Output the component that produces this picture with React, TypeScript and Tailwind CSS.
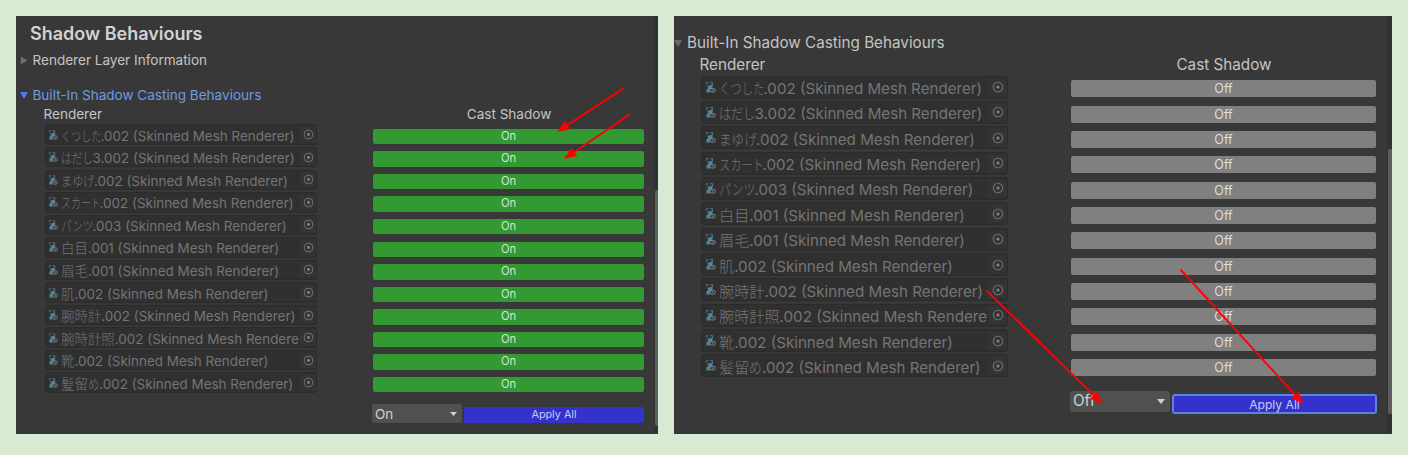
import React from "react";

type Segment = { text: string; className: string };
type Item = { id: string; name: Segment[]; suffix: string };

const SKINNED = "(Skinned Mesh Renderer)";

const items: Item[] = [
  { id: "socks", name: [{ text: "くつした", className: "w-[2.93em] scale-x-[0.75]" }], suffix: `.002 ${SKINNED}` },
  { id: "feet", name: [{ text: "はだし", className: "w-[2.35em] scale-x-[0.8]" }], suffix: `3.002 ${SKINNED}` },
  { id: "brow", name: [{ text: "まゆげ", className: "w-[2.45em] scale-x-[0.83]" }], suffix: `.002 ${SKINNED}` },
  { id: "skirt", name: [{ text: "スカート", className: "w-[2.87em] scale-x-[0.74]" }], suffix: `.002 ${SKINNED}` },
  { id: "pants", name: [{ text: "パンツ", className: "w-[2.35em] scale-x-[0.79]" }], suffix: `.003 ${SKINNED}` },
  { id: "eyes", name: [{ text: "白目", className: "w-[2em]" }], suffix: `.001 ${SKINNED}` },
  { id: "browhair", name: [{ text: "眉毛", className: "w-[2em]" }], suffix: `.001 ${SKINNED}` },
  { id: "skin", name: [{ text: "肌", className: "w-[1em]" }], suffix: `.002 ${SKINNED}` },
  { id: "watch", name: [{ text: "腕時計", className: "w-[3em]" }], suffix: `.002 ${SKINNED}` },
  { id: "watchlight", name: [{ text: "腕時計照", className: "w-[4em]" }], suffix: ".002 (Skinned Mesh Rendere" },
  { id: "shoes", name: [{ text: "靴", className: "w-[1em]" }], suffix: `.002 ${SKINNED}` },
  {
    id: "hairpin",
    name: [
      { text: "髪留", className: "w-[2em]" },
      { text: "め", className: "w-[0.84em] scale-x-[0.84]" },
    ],
    suffix: `.002 ${SKINNED}`,
  },
];

function MeshIcon({ className }: { className: string }) {
  return (
    <svg viewBox="0 0 20 22" className={className} fill="none">
      <path d="M1 5V1.5H5M8 1.5h5V6" stroke="#56707a" strokeWidth="2.2" />
      <path d="M2 7.5 8 7l2-2 4 2.5-2 5-5 2.5 1 6H1v-6l4-3.5Z" fill="#4a89a3" />
      <ellipse cx="13.4" cy="16.5" rx="5.4" ry="3.9" fill="#303030" stroke="#8c8c8c" strokeWidth="1.9" />
      <circle cx="13.4" cy="16.5" r="1.4" fill="#8a8a8a" />
    </svg>
  );
}

function PickerIcon({ className }: { className: string }) {
  return (
    <svg viewBox="0 0 12 12" className={className} fill="none">
      <circle cx="6" cy="6" r="4.7" stroke="#707070" strokeWidth="1.1" />
      <circle cx="6" cy="6" r="1.6" fill="#808080" />
    </svg>
  );
}

function Caret({ className }: { className: string }) {
  return (
    <svg viewBox="0 0 8 8" preserveAspectRatio="none" className={className}>
      <path d="M0 0h8L4 8Z" fill="currentColor" />
    </svg>
  );
}

type Size = {
  row: string;
  field: string;
  mesh: string;
  text: string;
  picker: string;
  pickerIcon: string;
};

function ObjectField({ item, size }: { item: Item; size: Size }) {
  return (
    <div className={size.row}>
      <div className={`flex items-center overflow-hidden rounded-[3px] border border-[#2b2b2b] bg-[#303030] ${size.field}`}>
        <MeshIcon className={size.mesh} />
        <div className={`min-w-0 flex-1 whitespace-nowrap text-[#757575] ${size.text}`}>
          {item.name.map((s) => (
            <span
              key={s.text}
              className={`inline-block origin-left whitespace-nowrap font-['Noto_Sans_CJK_JP',sans-serif] leading-none font-light ${s.className}`}
            >
              {s.text}
            </span>
          ))}
          <span>{item.suffix}</span>
        </div>
        <div className={`flex shrink-0 items-center justify-center bg-[#343434] ${size.picker}`}>
          <PickerIcon className={size.pickerIcon} />
        </div>
      </div>
    </div>
  );
}

const small: Size = {
  row: "h-[22.55px]",
  field: "h-[20.5px] w-[272px] pl-[3px]",
  mesh: "mr-[3px] h-[10px] w-[9px] shrink-0",
  text: "h-[20px] pt-[2px] text-[13.45px] leading-[19px]",
  picker: "h-[15px] w-[16px]",
  pickerIcon: "h-[11px] w-[11px]",
};

const large: Size = {
  row: "h-[25.37px]",
  field: "h-[23px] w-[306.5px] pl-[3.5px]",
  mesh: "mr-[3.5px] h-[11px] w-[10px] shrink-0",
  text: "h-[22px] pt-[2px] text-[15.15px] leading-[21px]",
  picker: "h-[17px] w-[18px]",
  pickerIcon: "h-[12px] w-[12px]",
};

function LeftPanel() {
  return (
    <section className="flex h-[418px] w-[642px] overflow-hidden bg-[#383838] text-[#c4c4c4]">
      <div className="flex w-[638px] flex-col">
        <h1 className="mt-[5px] ml-[14px] h-[26px] text-[18px] leading-[26px] font-semibold text-[#d2d2d2]">Shadow Behaviours</h1>
        <div className="mt-[3px] ml-[4px] flex h-5 items-center text-[13.55px]">
          <Caret className="mr-[4px] h-[7px] w-[8px] -rotate-90 text-[#727272]" />
          <span className="ml-[0.5px]">Renderer Layer Information</span>
        </div>
        <div className="mt-[15px] ml-[4px] flex h-5 items-center text-[13.55px] text-[#6f99e0]">
          <Caret className="mr-[4px] h-[7px] w-[8px] text-[#4a7be8]" />
          <span className="ml-[0.5px]">Built-In Shadow Casting Behaviours</span>
        </div>
        <div className="flex h-[19px] items-center text-[13.55px]">
          <span className="ml-[27.5px] w-[330px]">Renderer</span>
          <span className="w-[271px] text-center">Cast Shadow</span>
        </div>
        <div className="flex">
          <div className="mt-[0.45px] ml-[29px] w-[328px]">
            {items.map((i) => (
              <ObjectField key={i.id} item={i} size={small} />
            ))}
          </div>
          <div className="mt-[4.8px] w-[271px]">
            {items.map((i) => (
              <div key={i.id} className="h-[22.55px]">
                <button className="block h-[15.5px] w-full rounded-[2px] bg-[#339933] text-[11.2px] leading-[15.5px] text-[#cfe6cf]">On</button>
              </div>
            ))}
          </div>
        </div>
        <div className="ml-[356px] flex">
          <button className="mt-[5px] flex h-[19px] w-[90px] items-center justify-between rounded-[2px] bg-[#505050] pr-[5px] pl-[3px] text-[13.5px] text-[#d0d0d0]">
            On
            <Caret className="h-[4px] w-[7px]" />
          </button>
          <button className="mt-[8px] ml-[2px] h-[16px] w-[180px] rounded-[2px] bg-[#3333cc] text-[10.8px] leading-[16px] text-[#c9c9f2]">Apply All</button>
        </div>
      </div>
      <div className="w-[4px] bg-[#323232] pt-[174px] pl-px">
        <div className="h-[236px] rounded-l-[2px] bg-[#5d5d5d]" />
      </div>
    </section>
  );
}

function RightPanel() {
  return (
    <section className="flex h-[418px] w-[718px] overflow-hidden bg-[#383838] text-[#c4c4c4]">
      <div className="flex w-[713px] flex-col">
        <div className="mt-[17px] flex h-5 items-center text-[15.25px]">
          <Caret className="mr-[5px] h-[7px] w-[8px] text-[#686868]" />
          <span>Built-In Shadow Casting Behaviours</span>
        </div>
        <div className="mt-[2px] flex h-5 items-center text-[15.25px]">
          <span className="ml-[25.5px] w-[372px]">Renderer</span>
          <span className="w-[305px] text-center">Cast Shadow</span>
        </div>
        <div className="flex">
          <div className="mt-[0.5px] ml-[27px] w-[370px]">
            {items.map((i) => (
              <ObjectField key={i.id} item={i} size={large} />
            ))}
          </div>
          <div className="mt-[5.2px] w-[305px]">
            {items.map((i) => (
              <div key={i.id} className="h-[25.37px]">
                <button className="block h-[17px] w-full rounded-[2px] bg-[#808080] text-[12.5px] leading-[17px] text-[#dedede]">Off</button>
              </div>
            ))}
          </div>
        </div>
        <div className="ml-[396px] flex">
          <button className="mt-[6px] flex h-[21px] w-[100px] items-center justify-between rounded-[2px] bg-[#505050] pr-[5px] pl-[3px] text-[15.2px] text-[#d0d0d0]">
            Off
            <Caret className="h-[5px] w-[8px]" />
          </button>
          <button className="mt-[9px] ml-[2px] h-[20px] w-[205px] rounded-[3px] border-2 border-[#5b82dc] bg-[#3333cc] text-[12.1px] leading-[17px] text-[#c9c9f2]">Apply All</button>
        </div>
      </div>
      <div className="w-[5px] bg-[#323232] pt-[133px] pl-px">
        <div className="h-[265px] rounded-l-[2px] bg-[#5d5d5d]" />
      </div>
    </section>
  );
}

const arrows = [
  [623.5, 88.5, 557, 132],
  [629.5, 114.5, 564, 159],
  [986.5, 290.5, 1102.5, 403.8],
  [1180.5, 269.5, 1303.5, 404],
];

function Arrows() {
  return (
    <svg className="pointer-events-none absolute inset-0" width="1408" height="455" viewBox="0 0 1408 455">
      {arrows.map(([x1, y1, x2, y2]) => {
        const length = Math.hypot(x2 - x1, y2 - y1);
        const angle = (Math.atan2(y2 - y1, x2 - x1) * 180) / Math.PI;
        return (
          <g key={x1} transform={`translate(${x1} ${y1}) rotate(${angle})`} fill="#ff0000">
            <rect x="0" y="-0.95" width={length - 8} height="1.9" />
            <path d={`M${length} 0l-12.5 -5v10Z`} />
          </g>
        );
      })}
    </svg>
  );
}

export default function App() {
  return (
    <main className="relative flex h-[455px] w-[1408px] gap-4 overflow-hidden bg-[#d9ead3] p-4 font-['Inter','Noto_Sans_CJK_JP',sans-serif]">
      <LeftPanel />
      <RightPanel />
      <Arrows />
    </main>
  );
}
